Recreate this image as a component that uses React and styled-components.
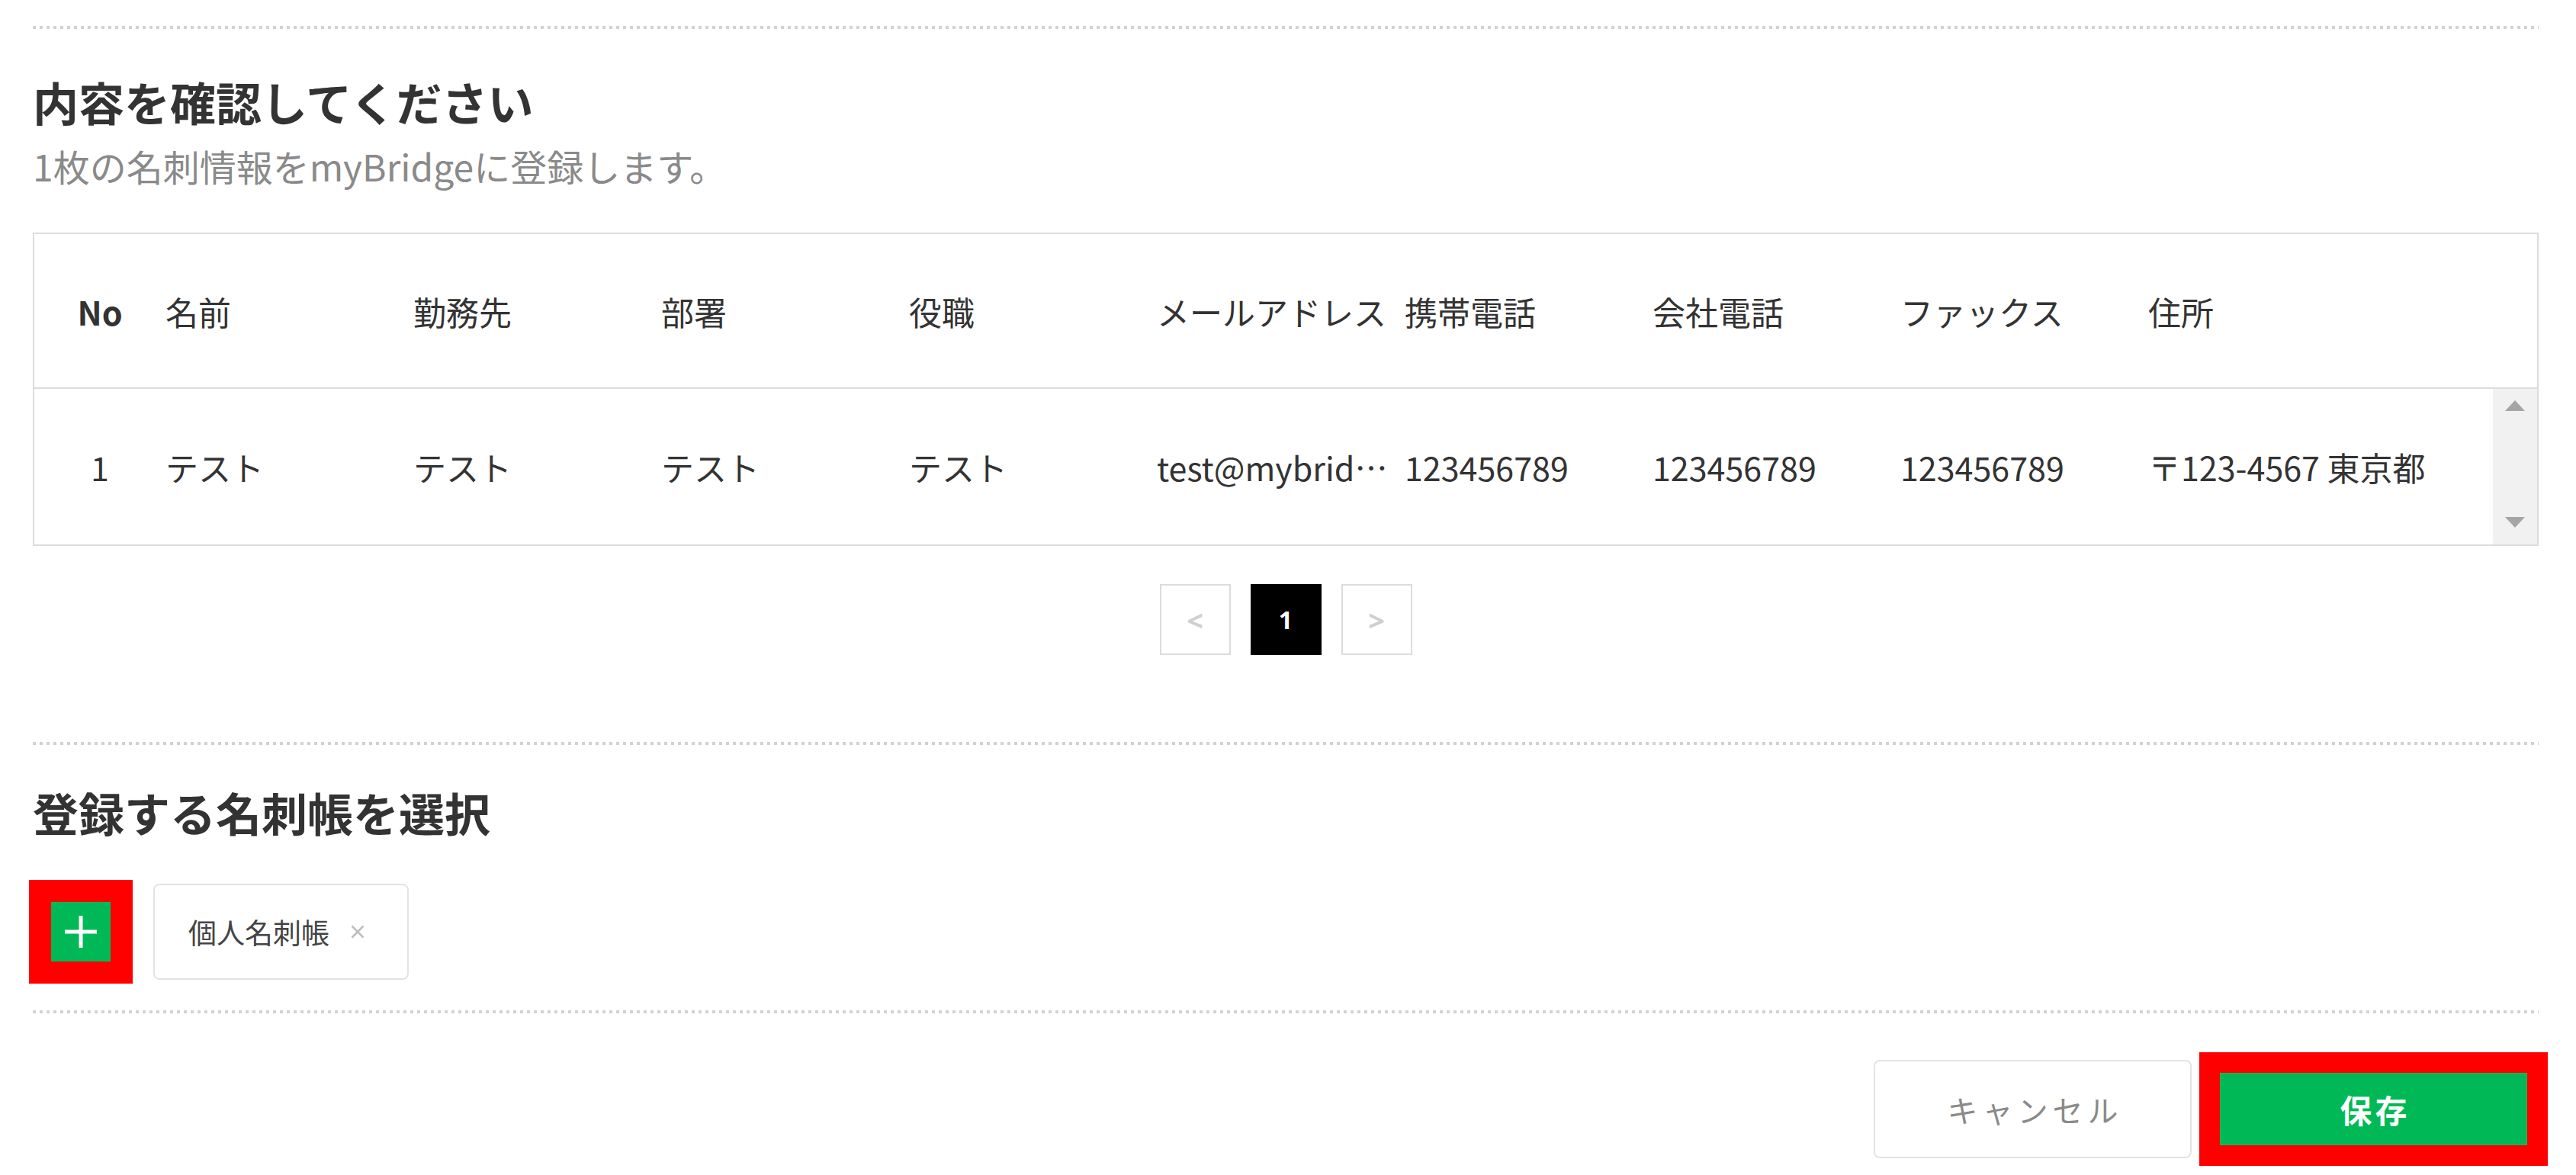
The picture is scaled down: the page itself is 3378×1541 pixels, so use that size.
import React from 'react';
import styled, { createGlobalStyle } from 'styled-components';

const GlobalStyle = createGlobalStyle`
    html, body {
        margin: 0;
        padding: 0;
        background: #fff;
    }
    body {
        font-family: "Noto Sans CJK JP", "Noto Sans", sans-serif;
        color: #333;
    }
`

const Page = styled.div`
    width: 3286px;
    margin-left: 43px;
    padding-top: 34px;
    padding-bottom: 12px;
`

const Dotted = styled.div`
    height: 4px;
    margin-top: ${p => p.$top || 0}px;
    background-image: repeating-linear-gradient(to right, #d2d2d2 0 4px, transparent 4px 9px);
`

const Title = styled.h2`
    margin: ${p => p.$top}px 0 0;
    font-size: 60px;
    line-height: 72px;
    font-weight: 700;
    color: #333;
`

const Sub = styled.p`
    margin: 18px 0 0;
    font-size: 48px;
    line-height: 60px;
    color: #8a8a8a;
`

const Table = styled.div`
    margin-top: 58px;
    border: 2px solid #dcdcdc;
    font-size: 43px;
    color: #333;
`

const cols = '172px repeat(8, 325px) 1fr'

const HeadRow = styled.div`
    display: grid;
    grid-template-columns: ${cols};
    align-items: center;
    height: 201px;
    border-bottom: 2px solid #dcdcdc;
`

const BodyRow = styled.div`
    display: flex;
    height: 204px;
`

const BodyCells = styled.div`
    flex: 1;
    display: grid;
    grid-template-columns: ${cols};
    align-items: center;
`

const HeadCell = styled.div`
    text-align: ${p => (p.$center ? 'center' : 'left')};
    font-weight: ${p => (p.$bold ? 700 : 400)};
    white-space: nowrap;
`

const Cell = styled.div`
    text-align: ${p => (p.$center ? 'center' : 'left')};
    white-space: nowrap;
    overflow: hidden;
    text-overflow: ellipsis;
    padding-right: ${p => (p.$center ? 0 : 12)}px;
`

const Scrollbar = styled.div`
    width: 58px;
    background: #f1f1f1;
    display: flex;
    flex-direction: column;
    align-items: center;
    justify-content: space-between;
    padding: 15px 0 22px;
    box-sizing: border-box;
`

const Arrow = styled.div`
    width: 0;
    height: 0;
    border-left: 13px solid transparent;
    border-right: 13px solid transparent;
    ${p => (p.$down ? 'border-top' : 'border-bottom')}: 14px solid #a5a5a5;
`

const Pager = styled.div`
    display: flex;
    justify-content: center;
    gap: 26px;
    margin-top: 50px;
`

const PageBtn = styled.div`
    width: 93px;
    height: 93px;
    box-sizing: border-box;
    display: flex;
    align-items: center;
    justify-content: center;
    border: 2px solid ${p => (p.$active ? '#000' : '#dcdcdc')};
    background: ${p => (p.$active ? '#000' : '#fff')};
    color: ${p => (p.$active ? '#fff' : '#cfcfcf')};
    font-family: "Noto Sans", sans-serif;
    font-size: ${p => (p.$active ? 32 : 38)}px;
    font-weight: 700;
`

const BookRow = styled.div`
    display: flex;
    align-items: center;
    gap: 27px;
    margin-top: 53px;
    margin-left: -5px;
`

const Highlight = styled.div`
    border: ${p => p.$w}px solid #ff0000;
    display: flex;
`

const AddBtn = styled.div`
    width: 78px;
    height: 78px;
    background: #00b956;
    display: flex;
    align-items: center;
    justify-content: center;
`

const Tag = styled.div`
    height: 126px;
    box-sizing: border-box;
    display: flex;
    align-items: center;
    gap: 28px;
    padding: 0 56px 0 44px;
    border: 2px solid #e3e3e3;
    border-radius: 8px;
    font-size: 37px;
    color: #444;
`

const Footer = styled.div`
    display: flex;
    justify-content: flex-end;
    align-items: center;
    gap: 10px;
    margin-top: 51px;
    margin-right: -12px;
`

const Cancel = styled.div`
    width: 417px;
    height: 129px;
    box-sizing: border-box;
    display: flex;
    align-items: center;
    justify-content: center;
    padding-left: 6px;
    border: 2px solid #e3e3e3;
    border-radius: 8px;
    font-size: 40px;
    letter-spacing: 6px;
    color: #8a8a8a;
`

const Save = styled.div`
    width: 403px;
    height: 95px;
    display: flex;
    align-items: center;
    justify-content: center;
    padding-left: 4px;
    box-sizing: border-box;
    background: #00b956;
    color: #fff;
    font-size: 42px;
    font-weight: 700;
    letter-spacing: 4px;
`

const heads = ['名前', '勤務先', '部署', '役職', 'メールアドレス', '携帯電話', '会社電話', 'ファックス', '住所']
const row = ['テスト', 'テスト', 'テスト', 'テスト', 'test@mybridge.com', '123456789', '123456789', '123456789', '〒123-4567 東京都']

const Plus = () => (
    <svg width="44" height="44" viewBox="0 0 44 44">
        <path d="M22 1v42M1 22h42" stroke="#fff" strokeWidth="5" fill="none" />
    </svg>
)

const Close = () => (
    <svg width="18" height="18" viewBox="0 0 18 18">
        <path d="M1.5 1.5l15 15M16.5 1.5l-15 15" stroke="#bdbdbd" strokeWidth="2.5" fill="none" />
    </svg>
)

const App = () => {
    return (
        <Page>
            <GlobalStyle />
            <Dotted />
            <Title $top={59}>内容を確認してください</Title>
            <Sub>1枚の名刺情報をmyBridgeに登録します。</Sub>

            <Table>
                <HeadRow>
                    <HeadCell $center $bold>No</HeadCell>
                    {heads.map(h => <HeadCell key={h}>{h}</HeadCell>)}
                </HeadRow>
                <BodyRow>
                    <BodyCells>
                        <Cell $center>1</Cell>
                        {row.map((v, i) => <Cell key={i}>{v}</Cell>)}
                    </BodyCells>
                    <Scrollbar>
                        <Arrow />
                        <Arrow $down />
                    </Scrollbar>
                </BodyRow>
            </Table>

            <Pager>
                <PageBtn>&lt;</PageBtn>
                <PageBtn $active>1</PageBtn>
                <PageBtn>&gt;</PageBtn>
            </Pager>

            <Dotted $top={114} />
            <Title $top={52}>登録する名刺帳を選択</Title>
            <BookRow>
                <Highlight $w={29}>
                    <AddBtn><Plus /></AddBtn>
                </Highlight>
                <Tag>
                    <span>個人名刺帳</span>
                    <Close />
                </Tag>
            </BookRow>

            <Dotted $top={35} />
            <Footer>
                <Cancel>キャンセル</Cancel>
                <Highlight $w={27}>
                    <Save>保存</Save>
                </Highlight>
            </Footer>
        </Page>
    );
};

export default App;
